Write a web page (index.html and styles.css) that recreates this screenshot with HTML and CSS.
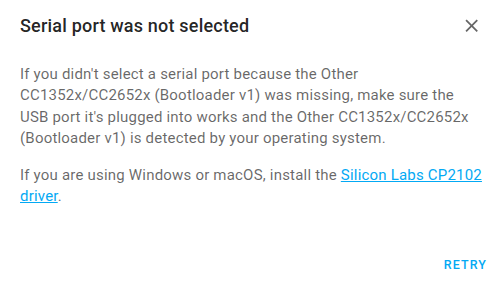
FILE: index.html
```html
<!DOCTYPE html>
<html>
<head>
<meta charset="utf-8">
<link rel="stylesheet" href="styles.css">
</head>
<body>
<div class="dialog">
  <div class="header">
    <h2 class="title">Serial port was not selected</h2>
    <button class="close" aria-label="Close">
      <svg viewBox="0 0 24 24" width="21.33" height="21.33"><path d="M19,6.41L17.59,5L12,10.59L6.41,5L5,6.41L10.59,12L5,17.59L6.41,19L12,13.41L17.59,19L19,17.59L13.41,12L19,6.41Z" fill="currentColor"/></svg>
    </button>
  </div>
  <div class="content">
    <p>If you didn't select a serial port because the Other CC1352x/CC2652x (Bootloader v1) was missing, make sure the USB port it's plugged into works and the Other CC1352x/CC2652x (Bootloader v1) is detected by your operating system.</p>
    <p>If you are using Windows or macOS, install the <a href="#">Silicon Labs CP2102 driver</a>.</p>
  </div>
  <div class="actions">
    <button class="btn">Retry</button>
  </div>
</div>
</body>
</html>
```

FILE: styles.css
```css
html, body {
  margin: 0;
  padding: 0;
  background: #fff;
}
body {
  font-family: Roboto, "Noto Sans", sans-serif;
  width: 499px;
  height: 288px;
  overflow: hidden;
}
.dialog {
  display: flex;
  flex-direction: column;
  height: 288px;
}
.header {
  display: flex;
  align-items: center;
  justify-content: space-between;
  padding: 12px 17px 0 20px;
}
.title {
  margin: 0;
  font-size: 18px;
  font-weight: 500;
  letter-spacing: 0.2px;
  line-height: 28px;
  color: rgba(0,0,0,0.87);
}
.close {
  border: 0;
  background: none;
  padding: 0;
  width: 21.33px;
  height: 21.33px;
  color: rgba(0,0,0,0.6);
  display: flex;
}
.content {
  width: 464px;
  padding: 24px 0 0 20px;
  font-size: 15px;
  line-height: 21.33px;
  color: rgba(0,0,0,0.6);
  letter-spacing: 0.2px;
}
.content p {
  margin: 0 0 15.67px;
}
.content a {
  color: #03a9f4;
}
.actions {
  margin-top: auto;
  display: flex;
  justify-content: flex-end;
  padding: 0 5px 8px;
}
.btn {
  border: 0;
  background: none;
  font-family: Roboto, sans-serif;
  font-size: 12.44px;
  font-weight: 500;
  letter-spacing: 1.11px;
  text-transform: uppercase;
  color: #03a9f4;
  padding: 0 7px;
  height: 32px;
}
```
